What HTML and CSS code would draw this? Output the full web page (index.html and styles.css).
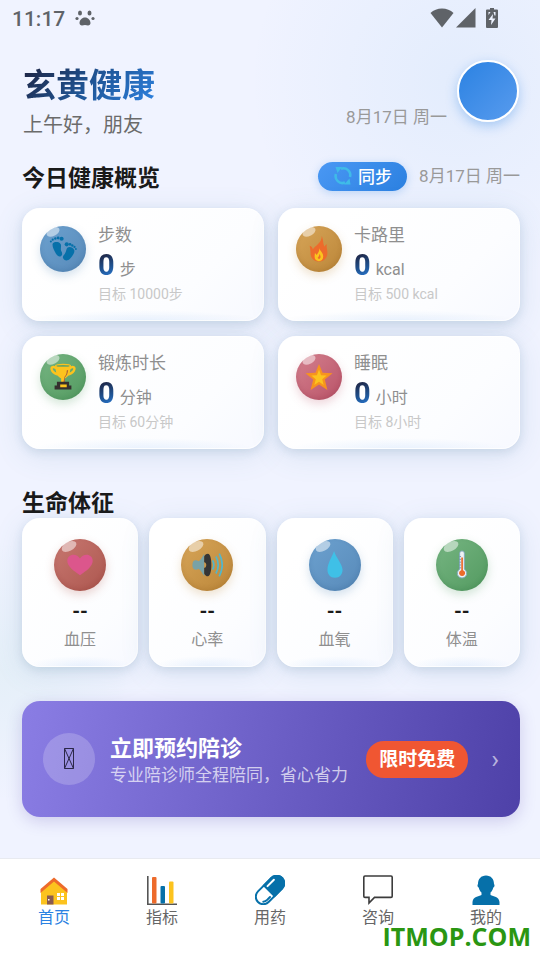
FILE: index.html
```html
<!DOCTYPE html>
<html lang="zh-CN">
<head>
    <meta charset="UTF-8">
    <meta name="viewport" content="width=device-width, initial-scale=1.0">
    <title>玄黄健康</title>
    <link rel="stylesheet" href="styles.css">
</head>
<body>
    <div class="status-bar">
        <span class="clock">11:17</span>
        <svg class="paw" viewBox="0 0 20 16" fill="#5f6368">
            <ellipse cx="5" cy="3" rx="2" ry="2.5"/><ellipse cx="14.500" cy="3" rx="2" ry="2.500"/>
            <circle cx="2" cy="8.500" r="1.600"/><circle cx="18" cy="8.500" r="1.600"/>
            <path d="M10 7.500c3 0 5.500 2.500 5.500 5.500 0 1.500-1 2.500-2.500 2.500-1 0-2-.5-3-.5s-2 .5-3 .5c-1.500 0-2.500-1-2.500-2.500 0-3 2.500-5.500 5.500-5.500z"/>
        </svg>
        <span class="status-icons">
            <svg width="24" height="20" viewBox="0 0 24 20" fill="#5f6368"><path d="M12 19.500L.5 5C3.500 2 7.500.5 12 .5S20.500 2 23.500 5z"/></svg>
            <svg width="20" height="20" viewBox="0 0 20 20" fill="#5f6368"><path d="M0 19.500L19.500 0v19.500z"/></svg>
            <svg class="battery" width="12" height="20" viewBox="0 0 12 20"><path fill="#5f6368" d="M4 0h4v1.500h3a1 1 0 0 1 1 1V19a1 1 0 0 1-1 1H1a1 1 0 0 1-1-1V2.500a1 1 0 0 1 1-1h3z"/><path fill="#eef3ff" d="M7 6l-4.500 6h3L5 17l4.500-6.500h-3zM2.500 4h2l-2 3zM7.500 4h2v3.500h-1z"/></svg>
        </span>
    </div>

    <main class="page">
        <header class="header">
            <div>
                <h1 class="app-name">玄黄健康</h1>
                <p class="greeting">上午好，朋友</p>
            </div>
            <div class="header-right">
                <span class="date">8月17日 周一</span>
                <button class="avatar" type="button" aria-label="我的"></button>
            </div>
        </header>

        <section>
            <div class="section-head">
                <h2 class="section-title">今日健康概览</h2>
                <button class="sync" type="button">
                    <svg width="20" height="20" viewBox="0 0 20 20" fill="none" stroke="#3fbbe8" stroke-width="2.600">
                        <path d="M8 3.800A6.800 6.800 0 0 1 17 12"/>
                        <path d="M12 17.500A6.800 6.800 0 0 1 3 9"/>
                        <path d="M2.500 2h6.500l-4.500 6z" fill="#3fbbe8" stroke="none"/>
                        <path d="M17.500 19.500h-6.500l5.500-6z" fill="#3fbbe8" stroke="none"/>
                    </svg>
                    同步
                </button>
                <span class="date">8月17日 周一</span>
            </div>

            <div class="overview">
                <article class="card">
                    <div class="orb blue">
                        <svg viewBox="0 0 30 30" fill="#0670a9">
                            <path d="M4 9c2-2 6-2 8 0 2 2 0 5 1 8 1 2 2 4 0 5.500-2 1.500-4 0-5.500-2.500C5.500 17 3 12 4 9z"/>
                            <circle cx="13.500" cy="4" r="2.200"/><circle cx="9.800" cy="3.200" r="1.500"/><circle cx="6.800" cy="3.800" r="1.300"/><circle cx="4" cy="5" r="1.200"/><circle cx="2" cy="7" r="1.100"/>
                            <path d="M27 16c-1-2.500-5-4-7-2.500-2 1.500-1 4-3 6.500-1.500 2-3 3.500-1.500 5.500 1.500 2.500 5 2 7 0 2.500-3 5.500-6.500 4.500-9.500z"/>
                            <circle cx="19" cy="10" r="2.200"/><circle cx="22.500" cy="10" r="1.500"/><circle cx="25" cy="11.300" r="1.300"/><circle cx="27.300" cy="12.800" r="1.200"/><circle cx="28.800" cy="15" r="1"/>
                        </svg>
                    </div>
                    <div class="info">
                        <h3 class="label">步数</h3>
                        <p class="reading"><b class="value">0</b><span class="unit">步</span></p>
                        <p class="goal">目标 10000步</p>
                    </div>
                </article>
                <article class="card">
                    <div class="orb amber">
                        <svg viewBox="0 0 30 30">
                            <path fill="#ed6b2b" d="M18 1c2 5 1 8 3 11.500.500-1 1-2 2.500-2.500-1 3 .5 5 .5 9 0 6-4 9.500-9 9.500s-9-3.500-9-9c0-3-.5-5-1-8 2 .5 3 2 3.500 4C10.500 11 18 9 18 1z"/>
                            <path fill="#fcc31e" d="M15.500 14c0 3 4 4.500 4 9 0 3-2 5-4.500 5s-4.700-2-4.700-4.500c0-2 .3-3 .3-4 1 .5 1.400 1 1.900 2 1.500-2 3-4 3-7.500z"/>
                            <path fill="#ed6b2b" d="M15.500 20c1 2 1.500 3 1 4.500-.4 1.500-2.500 1.500-3 0 1-1 2-2.500 2-4.500z"/>
                        </svg>
                    </div>
                    <div class="info">
                        <h3 class="label">卡路里</h3>
                        <p class="reading"><b class="value">0</b><span class="unit">kcal</span></p>
                        <p class="goal">目标 500 kcal</p>
                    </div>
                </article>
                <article class="card">
                    <div class="orb green">
                        <svg viewBox="0 0 30 30">
                            <path fill="none" stroke="#fcc31e" stroke-width="2.500" d="M8 6C4 2.500 1.500 5 3.500 8.500c1.500 2.500 4 3.500 7 4M22 6c4-3.500 6.500-1 4.500 2.500-1.500 2.500-4 3.500-7 4"/>
                            <path fill="#fcc31e" d="M7 3h16c0 8-1.500 11-6 13.500V21h-4v-4.500C8.500 14 7 11 7 3z"/>
                            <ellipse cx="15" cy="3.200" rx="8" ry="1.700" fill="#6aa463" stroke="#fcc31e" stroke-width="1.500"/>
                            <path fill="#a45e3c" d="M20.500 7.500c-.5 4-1.500 6-3.500 8v5h-1.500l1-5.500c2-2 2.500-4 2.500-7z"/>
                            <path fill="#35302e" d="M8.500 20h13v4h2.500v4.500H6V24h2.500z"/><path fill="#fcc31e" d="M12 23h7v3h-7z"/>
                        </svg>
                    </div>
                    <div class="info">
                        <h3 class="label">锻炼时长</h3>
                        <p class="reading"><b class="value">0</b><span class="unit">分钟</span></p>
                        <p class="goal">目标 60分钟</p>
                    </div>
                </article>
                <article class="card">
                    <div class="orb rose">
                        <svg viewBox="0 0 30 30"><path fill="#f7931e" d="M15 1l3.800 9.500 10.700.5-8.300 6.700L24 29l-9-6-9 6 2.800-11.300L.5 11l10.700-.5z"/><path fill="#fcc31e" d="M15 7l2.200 6.200 6 .3-4.700 4 1.500 6L15 20l-5 3.500 1.500-6-4.700-4 6-.3z"/></svg>
                    </div>
                    <div class="info">
                        <h3 class="label">睡眠</h3>
                        <p class="reading"><b class="value">0</b><span class="unit">小时</span></p>
                        <p class="goal">目标 8小时</p>
                    </div>
                </article>
            </div>
        </section>

        <section class="vitals-section">
            <h2 class="section-title">生命体征</h2>
            <div class="vitals">
                <article class="vital">
                    <div class="orb large red">
                        <svg viewBox="0 0 34 34"><path fill="#dc568c" d="M17 28C10 23 3.500 18.500 3.500 12.500 3.500 8.500 6.500 6 10 6c3 0 5.500 1.500 7 4 1.500-2.500 4-4 7-4 3.500 0 6.500 2.500 6.500 6.500C30.500 18.500 24 23 17 28z"/></svg>
                    </div>
                    <b class="vital-value">--</b>
                    <span class="vital-label">血压</span>
                </article>
                <article class="vital">
                    <div class="orb large amber">
                        <svg viewBox="0 0 34 34"><path fill="#79a2a6" d="M2 14c1-2.500 4-2.500 6-1 3-1.500 4-5 6-8v24c-2-3-3-6-6-8-2 1.500-5 1.500-6-1-.7-2-.7-4 0-6z"/><path fill="#353535" d="M14 8c1-2 2-3 4-3 5 0 5 24 0 24-2 0-3-1-4-3v-6c3 0 3-6 0-6z"/><path fill="none" stroke="#52b6cb" stroke-width="1.800" d="M23 12c1.500 3 1.500 7 0 10M26.500 8c3 5.500 3 12.500 0 18M30 5c4 7.500 4 16.500 0 24"/></svg>
                    </div>
                    <b class="vital-value">--</b>
                    <span class="vital-label">心率</span>
                </article>
                <article class="vital">
                    <div class="orb large blue">
                        <svg viewBox="0 0 34 34"><path fill="#3fc0e7" d="M16 2c2 7 9 14 9 20 0 5-3 8.500-8 8.500S9 27 9 22C9 15 14 8 16 2z"/></svg>
                    </div>
                    <b class="vital-value">--</b>
                    <span class="vital-label">血氧</span>
                </article>
                <article class="vital">
                    <div class="orb large green">
                        <svg viewBox="0 0 34 34"><path fill="#eef2f5" stroke="#7fa7bd" stroke-width="1" d="M14.500 4.500a2.500 2.500 0 0 1 5 0v17a5 5 0 1 1-5 0z"/><path fill="#ed6b2b" d="M16.200 9h1.800v13.500a3.200 3.200 0 1 1-1.800 0z"/><path stroke="#7896b0" d="M14 8h2M14 11h2M14 14h2M14 17h2M14 20h2"/></svg>
                    </div>
                    <b class="vital-value">--</b>
                    <span class="vital-label">体温</span>
                </article>
            </div>
        </section>

        <a class="banner" href="#booking">
            <span class="banner-icon">
                <svg width="12" height="22" viewBox="0 0 12 22" fill="none" stroke="#2b2748"><path d="M1.500.5h9v20h-9zM1.500.5l9 20M10.500.5l-9 20"/></svg>
            </span>
            <span class="banner-text">
                <strong class="banner-title">立即预约陪诊</strong>
                <span class="banner-sub">专业陪诊师全程陪同，省心省力</span>
            </span>
            <span class="badge">限时免费</span>
            <span class="arrow">›</span>
        </a>
    </main>

    <nav class="tab-bar">
        <a class="tab active" href="#home">
            <svg viewBox="0 0 30 30"><path fill="#fcc31e" d="M2 15L15 4l13 11v14.500H2z"/><path fill="#ed6b2b" d="M15 2.500l13.500 11.500v4L15 6.500 1.500 18v-4z"/><path fill="#8a5b50" d="M8 20.500h6.500v9H8z"/><path fill="#fff" d="M18 18h3v3h-3zM22 18h3v3h-3zM18 22h3v3h-3zM22 22h3v3h-3zM9 24h1.500v1.500H9z"/></svg>
            首页
        </a>
        <a class="tab" href="#metrics">
            <svg viewBox="0 0 30 30"><path fill="#555" d="M0 1h1.600v27.500H30V30H0z"/><rect x="5" y="2" width="4.500" height="26.500" rx="1" fill="#ed6b2b"/><rect x="13.500" y="11" width="4.500" height="17.500" rx="1" fill="#0670a9"/><rect x="22" y="6.500" width="4.500" height="22" rx="1" fill="#fcc31e"/></svg>
            指标
        </a>
        <a class="tab" href="#medicine">
            <svg viewBox="0 0 30 30"><g transform="rotate(-45 15 15)"><rect x="-2" y="7.500" width="34" height="15" rx="7.500" fill="#fff" stroke="#0670a9" stroke-width="2"/><path fill="#0670a9" d="M13 6.500h11.500a8.500 8.500 0 0 1 0 17H13z"/><path fill="none" stroke="#fff" stroke-width="2" stroke-linecap="round" d="M16 10.500h9"/><path fill="none" stroke="#0670a9" stroke-width="2" stroke-linecap="round" d="M2 18.500c1 1 2 1.500 4 1.500h4"/></g></svg>
            用药
        </a>
        <a class="tab" href="#consult">
            <svg viewBox="0 0 30 30"><path fill="none" stroke="#3c3c3c" stroke-width="1.600" d="M2 1h26q1.200 0 1.200 1.200v19q0 1.200-1.200 1.200H11.500L6 28v-5.600H2q-1.200 0-1.200-1.200v-19Q.8 1 2 1z"/></svg>
            咨询
        </a>
        <a class="tab" href="#mine">
            <svg viewBox="0 0 30 30" fill="#0670a9"><path d="M15 .5c5 0 8 3.500 8 8.500 1 1 .5 3-.7 3.500-.6 2.500-1.600 4-2.800 5V20c3 1.500 8.500 1.500 9 7v3H1.500v-3c.5-5.500 6-5.500 9-7v-2.500c-1.200-1-2.200-2.500-2.800-5C6.500 12 6 10 7 9c0-5 3-8.500 8-8.500z"/></svg>
            我的
        </a>
        <span class="site-mark">ITMOP.COM</span>
    </nav>
</body>
</html>
```

FILE: styles.css
```css
* {
    box-sizing: border-box;
    margin: 0;
    padding: 0;
}
body {
    font-family: Roboto, "Noto Sans CJK SC", sans-serif;
    min-height: 100vh;
    display: flex;
    flex-direction: column;
    color: #1a1a1a;
    background:
        radial-gradient(circle at 85% 80px, rgba(74, 160, 226, 0.08), transparent 210px),
        radial-gradient(circle at 0% 70%, rgba(80, 190, 160, 0.07), transparent 130px),
        #f0f3ff;
}
a {
    color: inherit;
    text-decoration: none;
}
button {
    font: inherit;
    border: none;
    cursor: pointer;
}

/* status bar */
.status-bar {
    height: 36px;
    padding: 0 42px 0 12px;
    display: flex;
    align-items: center;
    gap: 10px;
    color: #5f6368;
}
.clock {
    font-size: 21px;
    line-height: 24px;
    font-weight: 500;
    padding-top: 2px;
}
.paw {
    width: 20px;
    height: 16px;
}
.status-icons {
    margin-left: auto;
    display: flex;
    gap: 2px;
}
.battery {
    margin-left: 8px;
}

/* header */
.page {
    flex: 1;
    padding: 24px 20px 41px 22px;
}
.header {
    display: flex;
    justify-content: space-between;
    padding: 0 1px;
}
.app-name {
    font-size: 33px;
    line-height: 51px;
    font-weight: 700;
    background: linear-gradient(135deg, #1f2a4c 10%, #1f5596 50%, #2f86e8);
    -webkit-background-clip: text;
    background-clip: text;
    color: transparent;
}
.greeting {
    font-size: 20px;
    line-height: 28px;
    color: #6b6b6b;
}
.header-right {
    display: flex;
    align-items: flex-start;
    gap: 10px;
}
.date {
    font-size: 17px;
    line-height: 26px;
    color: #999;
}
.header-right .date {
    margin-top: 44px;
}
.avatar {
    width: 62px;
    height: 62px;
    border: 2px solid #fff;
    border-radius: 50%;
    background: linear-gradient(135deg, #2b82e2, #589bee);
    box-shadow: 0 4px 12px rgba(43, 130, 226, 0.35);
}

/* overview */
.section-head {
    display: flex;
    align-items: center;
    gap: 12px;
    margin: 21px 0 15px;
}
.section-head .date {
    padding-bottom: 2px;
}
.section-title {
    padding-top: 4px;
    font-size: 23px;
    line-height: 29px;
    font-weight: 700;
}
.sync {
    margin-left: auto;
    height: 29px;
    padding: 0 15px 3px;
    display: flex;
    align-items: center;
    gap: 5px;
    border-radius: 15px;
    background: linear-gradient(135deg, #4a98f4, #2b80e0);
    box-shadow: 0 2px 8px rgba(43, 128, 224, 0.25);
    color: #fff;
    font-size: 17px;
    font-weight: 500;
}
.overview {
    display: grid;
    grid-template-columns: 1fr 1fr;
    gap: 15px 14px;
}
.card,
.vital {
    border-radius: 18px;
    background:
        radial-gradient(ellipse at 50% 100%, rgba(120, 175, 245, 0.15), transparent 65%) bottom / 100% 12px no-repeat,
        linear-gradient(135deg, #fff 20%, #fcfdff 70%, #f7f9ff);
    box-shadow: 0 3px 10px rgba(70, 120, 150, 0.16), 0 6px 30px rgba(80, 130, 160, 0.14), inset 0 0 0 1px rgba(255, 255, 255, 0.8);
}
.card {
    display: flex;
    gap: 12px;
    padding: 15px 18px 18px;
}
.orb {
    position: relative;
    flex: none;
    width: 46px;
    height: 46px;
    margin-top: 3px;
    display: flex;
    align-items: center;
    justify-content: center;
    border-radius: 50%;
}
.orb::before {
    content: "";
    position: absolute;
    top: 5%;
    left: 13%;
    width: 30%;
    height: 17%;
    border-radius: 50%;
    background: rgba(255, 255, 255, 0.5);
    transform: rotate(-28deg);
}
.orb svg {
    width: 28px;
    height: 28px;
}
.orb.large {
    width: 52px;
    height: 52px;
    margin: 0;
}
.orb.large svg {
    width: 32px;
    height: 32px;
}
.blue {
    background: linear-gradient(135deg, #6ca1cf, #588ab9);
    box-shadow: 0 4px 10px rgba(88, 138, 185, 0.25), inset 0 -2px 5px rgba(20, 60, 110, 0.15);
}
.amber {
    background: linear-gradient(135deg, #d7a558, #bb8639);
    box-shadow: 0 4px 10px rgba(195, 142, 64, 0.25), inset 0 -2px 5px rgba(110, 60, 10, 0.15);
}
.green {
    background: linear-gradient(135deg, #76b582, #539a60);
    box-shadow: 0 4px 10px rgba(88, 160, 100, 0.25), inset 0 -2px 5px rgba(20, 90, 40, 0.15);
}
.rose {
    background: linear-gradient(135deg, #d4808e, #b95368);
    box-shadow: 0 4px 10px rgba(190, 90, 110, 0.25), inset 0 -2px 5px rgba(110, 20, 40, 0.15);
}
.red {
    background: linear-gradient(135deg, #c77770, #ad574f);
    box-shadow: 0 4px 10px rgba(180, 90, 80, 0.25), inset 0 -2px 5px rgba(110, 30, 20, 0.15);
}
.label {
    font-size: 17px;
    line-height: 24px;
    font-weight: 400;
    color: #8f8f8f;
}
.reading {
    display: flex;
    align-items: baseline;
    gap: 5px;
    margin-top: 3px;
    line-height: 30px;
}
.value {
    font-size: 29px;
    background: linear-gradient(160deg, #1f2a4c 20%, #1f5596 60%, #2f86e8);
    -webkit-background-clip: text;
    background-clip: text;
    color: transparent;
}
.unit {
    font-size: 16px;
    color: #8f8f8f;
}
.goal {
    font-size: 14px;
    line-height: 18px;
    color: #c8c8c8;
}

/* vitals */
.vitals-section {
    margin-top: 36px;
}
.vitals {
    display: grid;
    grid-template-columns: repeat(4, 1fr);
    gap: 11px;
}
.vital {
    display: flex;
    flex-direction: column;
    align-items: center;
    padding: 21px 8px 15px;
}
.vital-value {
    font-size: 20px;
    line-height: 24px;
    margin: 8px 0 5px;
}
.vital-label {
    font-size: 16px;
    line-height: 24px;
    color: #8f8f8f;
}

/* booking banner */
.banner {
    margin-top: 34px;
    padding: 29px 21px;
    display: flex;
    align-items: center;
    border-radius: 18px;
    background: linear-gradient(100deg, #8a7de4, #4e41a8);
    box-shadow: 0 4px 16px rgba(80, 65, 170, 0.22);
    color: #fff;
}
.banner-icon {
    flex: none;
    width: 52px;
    height: 52px;
    margin-right: 15px;
    display: flex;
    align-items: center;
    justify-content: center;
    border-radius: 50%;
    background: rgba(255, 255, 255, 0.2);
}
.banner-text {
    flex: 1;
    display: flex;
    flex-direction: column;
    padding-top: 6px;
}
.banner-title {
    font-size: 22px;
    line-height: 26px;
}
.banner-sub {
    font-size: 17px;
    line-height: 26px;
    color: rgba(255, 255, 255, 0.7);
    white-space: nowrap;
}
.badge {
    padding: 0 13px;
    border-radius: 18px;
    background: #f05632;
    font-size: 19px;
    line-height: 37px;
    font-weight: 700;
}
.arrow {
    margin-left: 23px;
    font-size: 26px;
    line-height: 28px;
    color: rgba(255, 255, 255, 0.6);
}

/* bottom tabs */
.tab-bar {
    position: relative;
    display: flex;
    height: 102px;
    padding-top: 16px;
    border-top: 1px solid #e8eaf0;
    background: #fff;
}
.tab {
    flex: 1;
    display: flex;
    flex-direction: column;
    align-items: center;
    gap: 2px;
    font-size: 16px;
    line-height: 22px;
    color: #666;
}
.tab svg {
    width: 30px;
    height: 30px;
}
.tab.active {
    color: #2b82e2;
}
.site-mark {
    position: absolute;
    right: 9px;
    bottom: 12px;
    font-family: "Open Sans", sans-serif;
    font-size: 25px;
    line-height: 24px;
    font-weight: 700;
    color: #2a9612;
}
```
